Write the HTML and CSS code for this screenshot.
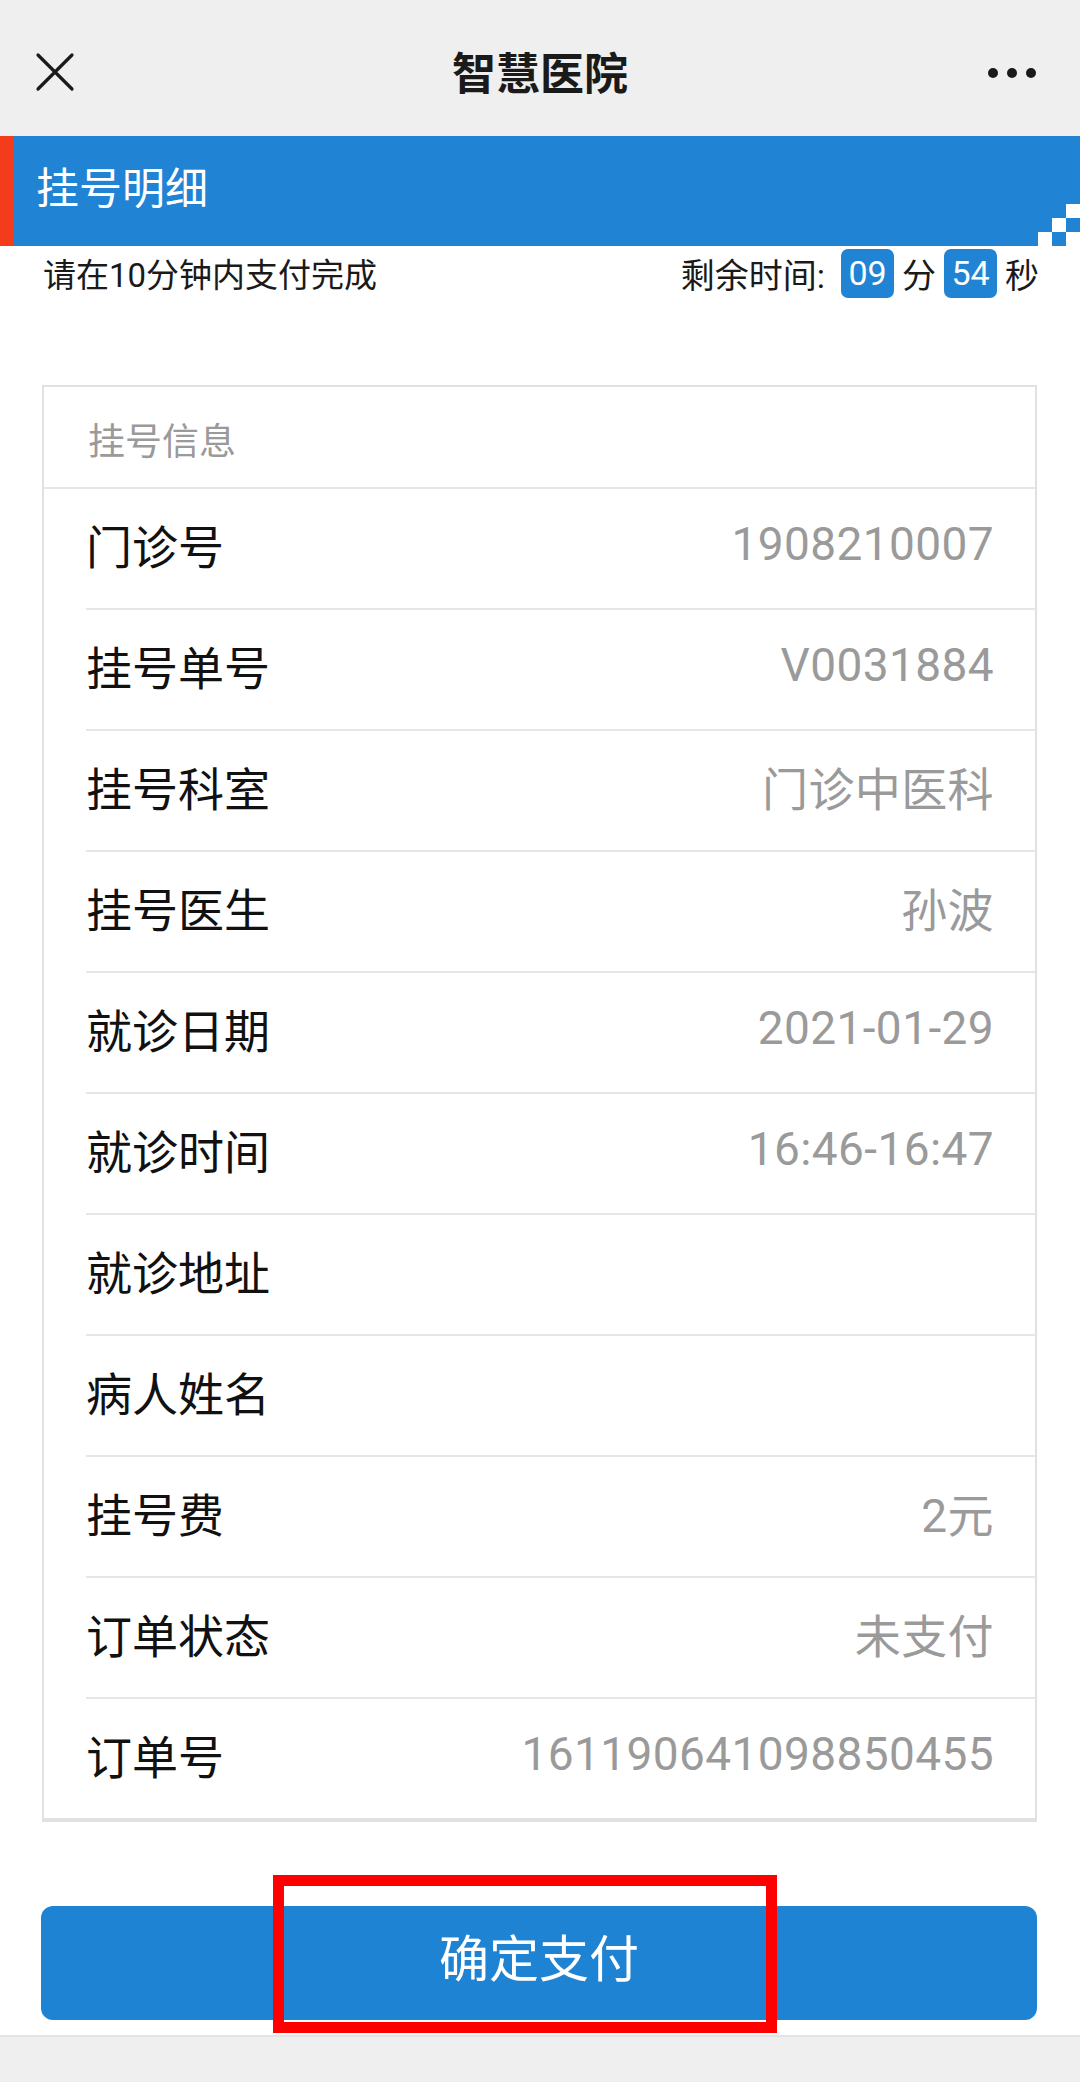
FILE: index.html
```html
<!DOCTYPE html>
<html lang="zh-CN">
<head>
<meta charset="utf-8">
<title>智慧医院</title>
<link rel="stylesheet" href="styles.css">
</head>
<body>
<div class="page">
  <header class="navbar">
    <svg class="nav-close" width="40" height="40" viewBox="0 0 40 40"><path d="M3 3 L37 37 M37 3 L3 37" stroke="#1a1a1a" stroke-width="3.2" fill="none" stroke-linecap="round"/></svg>
    <div class="nav-title">智慧医院</div>
    <div class="nav-more"><span></span><span></span><span></span></div>
  </header>

  <div class="section-title">
    <span>挂号明细</span>
    <svg class="pixels" width="42" height="42" viewBox="0 0 42 42">
      <rect x="28" y="0" width="14" height="14" fill="#fff"/>
      <rect x="14" y="14" width="14" height="14" fill="#fff"/>
      <rect x="0" y="28" width="14" height="14" fill="#fff"/>
      <rect x="28" y="28" width="14" height="14" fill="#fff"/>
    </svg>
  </div>

  <div class="countdown">
    <div class="cd-tip">请在10分钟内支付完成</div>
    <div class="cd-time">
      <span>剩余时间:</span>
      <span class="badge">09</span>
      <span>分</span>
      <span class="badge">54</span>
      <span>秒</span>
    </div>
  </div>

  <section class="card">
    <div class="card-head">挂号信息</div>
    <div class="row"><span class="label">门诊号</span><span class="value">1908210007</span></div>
    <div class="row"><span class="label">挂号单号</span><span class="value">V0031884</span></div>
    <div class="row"><span class="label">挂号科室</span><span class="value">门诊中医科</span></div>
    <div class="row"><span class="label">挂号医生</span><span class="value">孙波</span></div>
    <div class="row"><span class="label">就诊日期</span><span class="value">2021-01-29</span></div>
    <div class="row"><span class="label">就诊时间</span><span class="value">16:46-16:47</span></div>
    <div class="row"><span class="label">就诊地址</span><span class="value"></span></div>
    <div class="row"><span class="label">病人姓名</span><span class="value"></span></div>
    <div class="row"><span class="label">挂号费</span><span class="value">2元</span></div>
    <div class="row"><span class="label">订单状态</span><span class="value">未支付</span></div>
    <div class="row"><span class="label">订单号</span><span class="value">161190641098850455</span></div>
  </section>

  <div class="actions">
    <button class="pay-btn">确定支付</button>
    <div class="highlight"></div>
  </div>

  <div class="bottom-bar"></div>
</div>
</body>
</html>
```

FILE: styles.css
```css
html, body {
  margin: 0;
  padding: 0;
  background: #ffffff;
}
.page {
  width: 1080px;
  height: 2082px;
  overflow: hidden;
  font-family: Roboto, "Noto Sans CJK SC", sans-serif;
  color: #1a1a1a;
  display: flex;
  flex-direction: column;
}
.navbar {
  height: 136px;
  flex: none;
  background: #efefef;
  display: flex;
  align-items: center;
  justify-content: space-between;
  padding: 8px 44px 0 35px;
  box-sizing: border-box;
  position: relative;
}
.nav-title {
  position: absolute;
  left: 0;
  right: 0;
  top: 0;
  text-align: center;
  font-size: 44px;
  font-weight: 700;
  color: #1a1a1a;
  pointer-events: none;
  line-height: 150px;
}
.nav-more {
  display: flex;
  gap: 9px;
  margin-top: 2px;
}
.nav-more span {
  width: 10px;
  height: 10px;
  border-radius: 50%;
  background: #1a1a1a;
}
.section-title {
  height: 110px;
  flex: none;
  background: #2083d4;
  border-left: 14px solid #f43c1c;
  box-sizing: border-box;
  padding-left: 22px;
  padding-bottom: 12px;
  display: flex;
  align-items: center;
  color: #ffffff;
  font-size: 43px;
  position: relative;
}
.pixels {
  position: absolute;
  right: 0;
  bottom: 0;
}
.countdown {
  flex: none;
  display: flex;
  justify-content: space-between;
  align-items: center;
  height: 60px;
  padding: 0 41px 6px 43px;
  box-sizing: border-box;
  font-size: 33px;
  color: #1a1a1a;
}
.cd-time {
  display: flex;
  align-items: center;
  gap: 8px;
  font-size: 34px;
}
.cd-time span:first-child {
  margin-right: 8px;
}
.badge {
  background: #2083d4;
  color: #ffffff;
  border-radius: 7px;
  width: 53px;
  height: 49px;
  line-height: 49px;
  text-align: center;
  font-size: 34px;
}
.card {
  flex: none;
  margin: 79px 43px 0 42px;
  border: 2px solid #e1e1e1;
  border-bottom-width: 4px;
  background: #ffffff;
}
.card-head {
  height: 102px;
  display: flex;
  align-items: center;
  padding-left: 44px;
  padding-top: 4px;
  box-sizing: border-box;
  font-size: 37px;
  color: #9a9a9a;
  border-bottom: 2px solid #e6e6e6;
}
.row {
  height: 121px;
  margin-left: 42px;
  padding: 0 41px 9px 0;
  display: flex;
  align-items: center;
  justify-content: space-between;
  border-bottom: 2px solid #e6e6e6;
  box-sizing: border-box;
}
.row:last-child {
  border-bottom: none;
  height: 119px;
}
.label {
  font-size: 46px;
  color: #111111;
}
.value {
  font-size: 46px;
  letter-spacing: 0.4px;
  color: #9a9a9a;
}
.actions {
  flex: none;
  position: relative;
  margin: 84px 43px 0 41px;
}
.pay-btn {
  display: block;
  width: 100%;
  height: 114px;
  border: none;
  border-radius: 12px;
  background: #1f83d3;
  color: #ffffff;
  font-family: Roboto, "Noto Sans CJK SC", sans-serif;
  font-size: 50px;
  padding: 0 0 16px;
}
.highlight {
  position: absolute;
  left: 232px;
  top: -31px;
  width: 504px;
  height: 158px;
  border: 11px solid #ff0000;
  box-sizing: border-box;
  pointer-events: none;
}
.bottom-bar {
  flex: 1;
  margin-top: 15px;
  background: #efefef;
  border-top: 2px solid #e4e4e4;
}
```
